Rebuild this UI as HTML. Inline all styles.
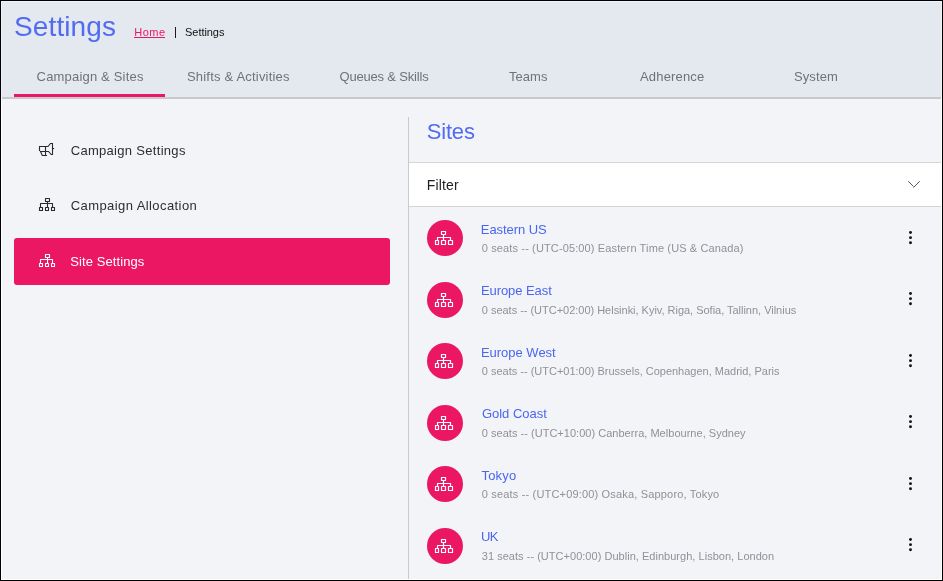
<!DOCTYPE html>
<html><head><meta charset="utf-8"><title>Settings</title>
<style>
html,body{margin:0;padding:0;width:943px;height:581px;overflow:hidden;background:#000}
svg{display:block;font-family:"Liberation Sans",sans-serif;will-change:transform}
</style></head><body>
<svg width="943" height="581" viewBox="0 0 943 581">
<rect x="0" y="0" width="943" height="581" fill="#000"/>
<rect x="1" y="1" width="941" height="579" fill="#fff"/>
<rect x="2" y="2" width="939" height="577" fill="#f3f4f8"/>
<rect x="2" y="2" width="939" height="95" fill="#e4e8ef"/>
<rect x="1" y="1" width="941" height="1" fill="#eff2f8"/>
<rect x="1" y="1" width="1" height="96" fill="#eff2f8"/>
<rect x="941" y="1" width="1" height="96" fill="#eff2f8"/>
<rect x="2" y="97" width="939" height="2" fill="#c6cacd"/>
<rect x="14" y="94" width="151" height="3" fill="#eb1763"/>
<text x="14" y="36" font-size="28" fill="#516cf1" letter-spacing="0.118" >Settings</text>
<text x="134.2" y="36" font-size="11" fill="#eb1763" letter-spacing="0.525" >Home</text>
<rect x="134" y="37" width="31" height="1" fill="#eb1763"/>
<rect x="175" y="27" width="1" height="11" fill="#1a1a1a"/>
<text x="185.1" y="36" font-size="11" fill="#111" letter-spacing="-0.064" >Settings</text>
<text x="36.6" y="81" font-size="13" fill="#6f7278" letter-spacing="0.183" >Campaign &amp; Sites</text>
<text x="187" y="81" font-size="13" fill="#6f7278" letter-spacing="0.195" >Shifts &amp; Activities</text>
<text x="339.5" y="81" font-size="13" fill="#6f7278" letter-spacing="-0.183" >Queues &amp; Skills</text>
<text x="509" y="81" font-size="13" fill="#6f7278" letter-spacing="0.053" >Teams</text>
<text x="640" y="81" font-size="13" fill="#6f7278" letter-spacing="0.169" >Adherence</text>
<text x="794" y="81" font-size="13" fill="#6f7278" letter-spacing="0.097" >System</text>
<text x="70.7" y="155" font-size="13" fill="#2e2e2e" letter-spacing="0.304" >Campaign Settings</text>
<text x="70.7" y="210" font-size="13" fill="#2e2e2e" letter-spacing="0.422" >Campaign Allocation</text>
<rect x="14" y="238" width="376" height="47" rx="3" fill="#eb1763"/>
<text x="70.3" y="266" font-size="13" fill="#fff" letter-spacing="0.085" >Site Settings</text>
<g fill="none" stroke="#2a2a2a" stroke-width="1.1" stroke-linejoin="miter" stroke-linecap="square"><path d="M39.5,150.5 V146.5 H48 L50.5,143.5 H52.5 V154.5 H51.2 L48.5,151.5 H40.5"/><path d="M45.5,146.5 V155.5"/><path d="M40.5,151.5 L42.3,155.5 H46.5"/><path d="M53.5,148.5 H53.6"/></g>
<g fill="none" stroke="#2a2a2a" stroke-width="1.1" stroke-linejoin="round" transform="translate(0,0)"><rect x="45.5" y="198.5" width="4" height="3"/><path d="M47.5,201.5 V207.5"/><path d="M40.5,207.5 V203.5 H52.5 V207.5"/><rect x="39.5" y="207.5" width="3" height="3"/><rect x="45.5" y="207.5" width="3" height="3"/><rect x="51.5" y="207.5" width="3" height="3"/></g>
<g fill="none" stroke="#fff" stroke-width="1.1" stroke-linejoin="round" transform="translate(0,56)"><rect x="45.5" y="198.5" width="4" height="3"/><path d="M47.5,201.5 V207.5"/><path d="M40.5,207.5 V203.5 H52.5 V207.5"/><rect x="39.5" y="207.5" width="3" height="3"/><rect x="45.5" y="207.5" width="3" height="3"/><rect x="51.5" y="207.5" width="3" height="3"/></g>
<rect x="408" y="117" width="1" height="462" fill="#c9cacc"/>
<text x="426.8" y="139" font-size="22" fill="#516cf1" letter-spacing="-0.202" >Sites</text>
<rect x="409" y="162" width="532" height="45" fill="#fff"/>
<rect x="409" y="162" width="532" height="1" fill="#d2d4d8"/>
<rect x="409" y="206" width="532" height="1" fill="#d2d4d8"/>
<text x="426.8" y="190" font-size="14" fill="#1f1f1f" letter-spacing="0.15" >Filter</text>
<path d="M908.2,181.2 L913.5,186.5 M913.5,187.5 L919.8,181.2" fill="none" stroke="#555" stroke-width="1"/>
<circle cx="445" cy="238" r="18" fill="#eb1763"/>
<g fill="none" stroke="#fff" stroke-width="1.2" stroke-linejoin="round" transform="translate(0,0)"><rect x="441.5" y="231.5" width="4" height="3"/><path d="M443.5,234.5 V240.5"/><path d="M437.5,240.5 V237.5 H450.5 V240.5"/><rect x="435.5" y="240.5" width="3" height="4"/><rect x="441.5" y="240.5" width="4" height="4"/><rect x="448.5" y="240.5" width="4" height="4"/></g>
<text x="480.8" y="234" font-size="13" fill="#4a66f0" letter-spacing="-0.056" >Eastern US</text>
<text x="481.8" y="252" font-size="11" fill="#8e9196" letter-spacing="0.128" >0 seats -- (UTC-05:00) Eastern Time (US &amp; Canada)</text>
<circle cx="910.5" cy="232.50" r="1.45" fill="#111"/>
<circle cx="910.5" cy="237.65" r="1.45" fill="#111"/>
<circle cx="910.5" cy="242.80" r="1.45" fill="#111"/>
<circle cx="445" cy="300" r="18" fill="#eb1763"/>
<g fill="none" stroke="#fff" stroke-width="1.2" stroke-linejoin="round" transform="translate(0,62)"><rect x="441.5" y="231.5" width="4" height="3"/><path d="M443.5,234.5 V240.5"/><path d="M437.5,240.5 V237.5 H450.5 V240.5"/><rect x="435.5" y="240.5" width="3" height="4"/><rect x="441.5" y="240.5" width="4" height="4"/><rect x="448.5" y="240.5" width="4" height="4"/></g>
<text x="480.9" y="295" font-size="13" fill="#4a66f0" letter-spacing="-0.063" >Europe East</text>
<text x="481.8" y="314" font-size="11" fill="#8e9196" letter-spacing="-0.02" >0 seats -- (UTC+02:00) Helsinki, Kyiv, Riga, Sofia, Tallinn, Vilnius</text>
<circle cx="910.5" cy="293.50" r="1.45" fill="#111"/>
<circle cx="910.5" cy="298.65" r="1.45" fill="#111"/>
<circle cx="910.5" cy="303.80" r="1.45" fill="#111"/>
<circle cx="445" cy="361" r="18" fill="#eb1763"/>
<g fill="none" stroke="#fff" stroke-width="1.2" stroke-linejoin="round" transform="translate(0,123)"><rect x="441.5" y="231.5" width="4" height="3"/><path d="M443.5,234.5 V240.5"/><path d="M437.5,240.5 V237.5 H450.5 V240.5"/><rect x="435.5" y="240.5" width="3" height="4"/><rect x="441.5" y="240.5" width="4" height="4"/><rect x="448.5" y="240.5" width="4" height="4"/></g>
<text x="480.9" y="357" font-size="13" fill="#4a66f0" letter-spacing="-0.01" >Europe West</text>
<text x="481.8" y="375" font-size="11" fill="#8e9196" letter-spacing="-0.006" >0 seats -- (UTC+01:00) Brussels, Copenhagen, Madrid, Paris</text>
<circle cx="910.5" cy="355.50" r="1.45" fill="#111"/>
<circle cx="910.5" cy="360.65" r="1.45" fill="#111"/>
<circle cx="910.5" cy="365.80" r="1.45" fill="#111"/>
<circle cx="445" cy="423" r="18" fill="#eb1763"/>
<g fill="none" stroke="#fff" stroke-width="1.2" stroke-linejoin="round" transform="translate(0,185)"><rect x="441.5" y="231.5" width="4" height="3"/><path d="M443.5,234.5 V240.5"/><path d="M437.5,240.5 V237.5 H450.5 V240.5"/><rect x="435.5" y="240.5" width="3" height="4"/><rect x="441.5" y="240.5" width="4" height="4"/><rect x="448.5" y="240.5" width="4" height="4"/></g>
<text x="481.9" y="418" font-size="13" fill="#4a66f0" letter-spacing="-0.002" >Gold Coast</text>
<text x="481.8" y="437" font-size="11" fill="#8e9196" letter-spacing="0.025" >0 seats -- (UTC+10:00) Canberra, Melbourne, Sydney</text>
<circle cx="910.5" cy="416.50" r="1.45" fill="#111"/>
<circle cx="910.5" cy="421.65" r="1.45" fill="#111"/>
<circle cx="910.5" cy="426.80" r="1.45" fill="#111"/>
<circle cx="445" cy="484" r="18" fill="#eb1763"/>
<g fill="none" stroke="#fff" stroke-width="1.2" stroke-linejoin="round" transform="translate(0,246)"><rect x="441.5" y="231.5" width="4" height="3"/><path d="M443.5,234.5 V240.5"/><path d="M437.5,240.5 V237.5 H450.5 V240.5"/><rect x="435.5" y="240.5" width="3" height="4"/><rect x="441.5" y="240.5" width="4" height="4"/><rect x="448.5" y="240.5" width="4" height="4"/></g>
<text x="481.4" y="480" font-size="13" fill="#4a66f0" letter-spacing="0.243" >Tokyo</text>
<text x="481.8" y="498" font-size="11" fill="#8e9196" letter-spacing="0.173" >0 seats -- (UTC+09:00) Osaka, Sapporo, Tokyo</text>
<circle cx="910.5" cy="478.50" r="1.45" fill="#111"/>
<circle cx="910.5" cy="483.65" r="1.45" fill="#111"/>
<circle cx="910.5" cy="488.80" r="1.45" fill="#111"/>
<circle cx="445" cy="546" r="18" fill="#eb1763"/>
<g fill="none" stroke="#fff" stroke-width="1.2" stroke-linejoin="round" transform="translate(0,308)"><rect x="441.5" y="231.5" width="4" height="3"/><path d="M443.5,234.5 V240.5"/><path d="M437.5,240.5 V237.5 H450.5 V240.5"/><rect x="435.5" y="240.5" width="3" height="4"/><rect x="441.5" y="240.5" width="4" height="4"/><rect x="448.5" y="240.5" width="4" height="4"/></g>
<text x="480.9" y="541" font-size="13" fill="#4a66f0" letter-spacing="-0.6" >UK</text>
<text x="481.8" y="560" font-size="11" fill="#8e9196" letter-spacing="0.028" >31 seats -- (UTC+00:00) Dublin, Edinburgh, Lisbon, London</text>
<circle cx="910.5" cy="539.50" r="1.45" fill="#111"/>
<circle cx="910.5" cy="544.65" r="1.45" fill="#111"/>
<circle cx="910.5" cy="549.80" r="1.45" fill="#111"/>
</svg>
</body></html>
